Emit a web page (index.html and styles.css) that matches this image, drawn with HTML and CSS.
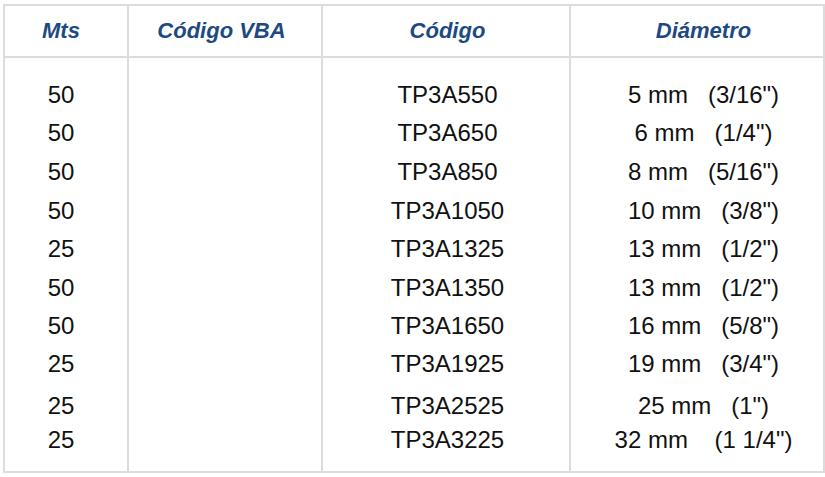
FILE: index.html
```html
<!DOCTYPE html>
<html lang="es">
<head>
<meta charset="utf-8">
<title>Tabla de medidas</title>
<link rel="stylesheet" href="styles.css">
</head>
<body>
<div class="wrap">
<table class="spec">
  <colgroup>
    <col class="c-mts">
    <col class="c-vba">
    <col class="c-cod">
    <col class="c-dia">
  </colgroup>
  <thead>
    <tr>
      <th class="col1">Mts</th>
      <th class="col2">Código VBA</th>
      <th class="col3">Código</th>
      <th class="col4">Diámetro</th>
    </tr>
  </thead>
  <tbody>
    <tr>
      <td class="col1">
        <div class="ln">50</div><div class="ln">50</div><div class="ln">50</div><div class="ln">50</div><div class="ln">25</div>
        <div class="ln">50</div><div class="ln">50</div><div class="ln">25</div><div class="ln">25</div><div class="ln">25</div>
      </td>
      <td class="col2"></td>
      <td class="col3">
        <div class="ln">TP3A550</div><div class="ln">TP3A650</div><div class="ln">TP3A850</div><div class="ln">TP3A1050</div><div class="ln">TP3A1325</div>
        <div class="ln">TP3A1350</div><div class="ln">TP3A1650</div><div class="ln">TP3A1925</div><div class="ln">TP3A2525</div><div class="ln">TP3A3225</div>
      </td>
      <td class="col4">
        <div class="ln">5 mm   (3/16")</div>
        <div class="ln">6 mm   (1/4")</div>
        <div class="ln">8 mm   (5/16")</div>
        <div class="ln">10 mm   (3/8")</div>
        <div class="ln">13 mm   (1/2")</div>
        <div class="ln">13 mm   (1/2")</div>
        <div class="ln">16 mm   (5/8")</div>
        <div class="ln">19 mm   (3/4")</div>
        <div class="ln">25 mm   (1")</div>
        <div class="ln">32 mm    (1 1/4")</div>
      </td>
    </tr>
  </tbody>
</table>
</div>
</body>
</html>
```

FILE: styles.css
```css
html, body {
  margin: 0;
  padding: 0;
  background: #ffffff;
}

.wrap {
  padding: 4px 0 0 3px;
}

.spec {
  width: 820px;
  table-layout: fixed;
  border-collapse: collapse;
  font-family: "Liberation Sans", Arial, sans-serif;
  color: #111111;
}

.c-mts { width: 124px; }
.c-vba { width: 194px; }
.c-cod { width: 248px; }
.c-dia { width: 254px; }

.spec th,
.spec td {
  border: 2px solid #dcdcdc;
  text-align: center;
  padding: 0;
}

.spec th {
  height: 50px;
  font-size: 22px;
  font-weight: bold;
  font-style: italic;
  color: #1e4a82;
  vertical-align: middle;
}

.spec td {
  vertical-align: top;
  padding-top: 22px;
  padding-bottom: 16px;
  height: 374px;
}

.col1 { padding-right: 10px !important; }
.col2 { padding-right: 7px !important; }
.col3 { padding-left: 3px !important; }
.col4 { padding-left: 13px !important; }

.ln {
  height: 30px;
  line-height: 30px;
  font-size: 24px;
  white-space: pre;
  margin-top: 8px;
}

.ln:nth-child(1) { margin-top: 0; }
.ln:nth-child(3),
.ln:nth-child(4) { margin-top: 9px; }
.ln:nth-child(5) { margin-top: 8px; }
.ln:nth-child(6) { margin-top: 9px; }
.ln:nth-child(9) { margin-top: 12px; }
.ln:nth-child(10) { margin-top: 4px; }
```
